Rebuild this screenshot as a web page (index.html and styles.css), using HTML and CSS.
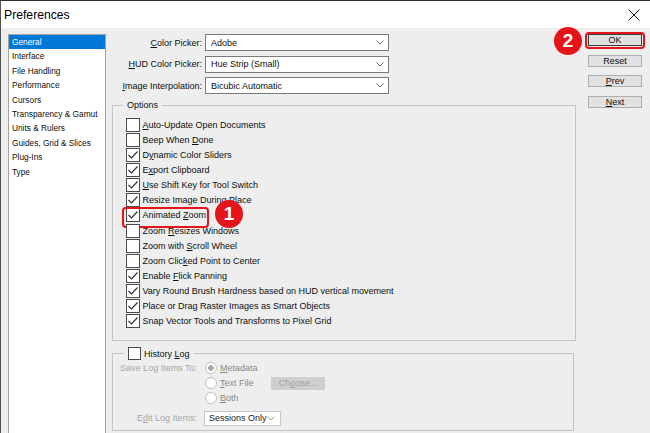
FILE: index.html
```html
<!DOCTYPE html>
<html>
<head>
<meta charset="utf-8">
<title>Preferences</title>
<link rel="stylesheet" href="styles.css">
</head>
<body>
<div class="window">
  <div class="titlebar">
    <span class="title">Preferences</span>
    <svg class="close" viewBox="0 0 12 12"><path d="M0.5 0.5 L11.5 11.5 M11.5 0.5 L0.5 11.5" stroke="#1a1a1a" stroke-width="1" fill="none"/></svg>
  </div>
  <div class="body">
    <ul class="nav">
      <li class="sel">General</li>
      <li>Interface</li>
      <li>File Handling</li>
      <li>Performance</li>
      <li>Cursors</li>
      <li>Transparency &amp; Gamut</li>
      <li>Units &amp; Rulers</li>
      <li>Guides, Grid &amp; Slices</li>
      <li>Plug-Ins</li>
      <li>Type</li>
    </ul>
    <div class="main">
      <div class="pickers">
        <span class="plabel"><u>C</u>olor Picker:</span>
        <div class="select"><span>Adobe</span><svg class="chev" viewBox="0 0 8 5"><path d="M0.5 0.5 L4 4 L7.5 0.5" stroke="#6a6a6a" fill="none"/></svg></div>
        <span class="plabel"><u>H</u>UD Color Picker:</span>
        <div class="select"><span>Hue Strip (Small)</span><svg class="chev" viewBox="0 0 8 5"><path d="M0.5 0.5 L4 4 L7.5 0.5" stroke="#6a6a6a" fill="none"/></svg></div>
        <span class="plabel"><u>I</u>mage Interpolation:</span>
        <div class="select"><span>Bicubic Automatic</span><svg class="chev" viewBox="0 0 8 5"><path d="M0.5 0.5 L4 4 L7.5 0.5" stroke="#6a6a6a" fill="none"/></svg></div>
      </div>

      <fieldset class="group options">
        <legend>Options</legend>
        <div class="checks">
          <div class="row"><span class="cb"></span><span><u>A</u>uto-Update Open Documents</span></div>
          <div class="row"><span class="cb"></span><span>Beep When <u>D</u>one</span></div>
          <div class="row"><span class="cb on"><svg viewBox="0 0 14 14"><path d="M2.5 7 L5.5 10 L11.5 3.5" stroke="#333" stroke-width="1.2" fill="none"/></svg></span><span>D<u>y</u>namic Color Sliders</span></div>
          <div class="row"><span class="cb on"><svg viewBox="0 0 14 14"><path d="M2.5 7 L5.5 10 L11.5 3.5" stroke="#333" stroke-width="1.2" fill="none"/></svg></span><span>E<u>x</u>port Clipboard</span></div>
          <div class="row"><span class="cb on"><svg viewBox="0 0 14 14"><path d="M2.5 7 L5.5 10 L11.5 3.5" stroke="#333" stroke-width="1.2" fill="none"/></svg></span><span><u>U</u>se Shift Key for Tool Switch</span></div>
          <div class="row"><span class="cb on"><svg viewBox="0 0 14 14"><path d="M2.5 7 L5.5 10 L11.5 3.5" stroke="#333" stroke-width="1.2" fill="none"/></svg></span><span>Resize Image Durin<u>g</u> Place</span></div>
          <div class="row hl"><span class="cb on"><svg viewBox="0 0 14 14"><path d="M2.5 7 L5.5 10 L11.5 3.5" stroke="#333" stroke-width="1.2" fill="none"/></svg></span><span>Animated <u>Z</u>oom</span><span class="badge b1">1</span></div>
          <div class="row"><span class="cb"></span><span>Zoom <u>R</u>esizes Windows</span></div>
          <div class="row"><span class="cb"></span><span>Zoom with <u>S</u>croll Wheel</span></div>
          <div class="row"><span class="cb"></span><span>Zoom Clic<u>k</u>ed Point to Center</span></div>
          <div class="row"><span class="cb on"><svg viewBox="0 0 14 14"><path d="M2.5 7 L5.5 10 L11.5 3.5" stroke="#333" stroke-width="1.2" fill="none"/></svg></span><span>Enable <u>F</u>lick Panning</span></div>
          <div class="row"><span class="cb on"><svg viewBox="0 0 14 14"><path d="M2.5 7 L5.5 10 L11.5 3.5" stroke="#333" stroke-width="1.2" fill="none"/></svg></span><span>Vary Round Brush Hardness based on HUD vertical movement</span></div>
          <div class="row"><span class="cb on"><svg viewBox="0 0 14 14"><path d="M2.5 7 L5.5 10 L11.5 3.5" stroke="#333" stroke-width="1.2" fill="none"/></svg></span><span>Place or Drag Raster Images as Smart Objects</span></div>
          <div class="row"><span class="cb on"><svg viewBox="0 0 14 14"><path d="M2.5 7 L5.5 10 L11.5 3.5" stroke="#333" stroke-width="1.2" fill="none"/></svg></span><span>Snap Vector Tools and Transforms to Pixel Grid</span></div>
        </div>
      </fieldset>

      <fieldset class="group history">
        <legend><span class="cb"></span><span>History <u>L</u>og</span></legend>
        <div class="hrow">
          <span class="hlabel">Save Log Items To:</span>
          <span class="opt"><span class="radio checked"></span><span><u>M</u>etadata</span></span>
        </div>
        <div class="hrow">
          <span class="hlabel"></span>
          <span class="opt"><span class="radio"></span><span><u>T</u>ext File</span></span>
          <span class="choose">Ch<u>o</u>ose...</span>
        </div>
        <div class="hrow">
          <span class="hlabel"></span>
          <span class="opt"><span class="radio"></span><span><u>B</u>oth</span></span>
        </div>
        <div class="hrow edit">
          <span class="hlabel">E<u>d</u>it Log Items:</span>
          <div class="dsel"><span>Sessions Only</span><svg class="chev" viewBox="0 0 8 5"><path d="M0.5 0.5 L4 4 L7.5 0.5" stroke="#a0a0a0" fill="none"/></svg></div>
        </div>
      </fieldset>
    </div>
    <div class="buttons">
      <div class="btn default">OK<span class="badge b2">2</span></div>
      <div class="btn">Reset</div>
      <div class="btn"><u>P</u>rev</div>
      <div class="btn"><u>N</u>ext</div>
    </div>
  </div>
</div>
</body>
</html>
```

FILE: styles.css
```css
* { box-sizing: border-box; }
html, body { margin: 0; padding: 0; }
body {
  width: 650px;
  height: 433px;
  overflow: hidden;
  background: #eeeeee;
  font-family: "Liberation Sans", Arial, sans-serif;
  font-size: 9px;
  color: #0d0d0d;
}
u { text-underline-offset: 1px; }
.window {
  height: 433px;
  border-top: 1px solid #2e2e2e;
  border-left: 1px solid #505050;
}
.titlebar {
  height: 27px;
  background: #fff;
  display: flex;
  align-items: center;
  justify-content: space-between;
  padding: 0 10px 0 3px;
}
.title { font-size: 12.2px; color: #000; }
.close { width: 12px; height: 12px; display: block; }

.body { display: flex; align-items: flex-start; }

.nav {
  list-style: none;
  margin: 6px 0 0 7px;
  padding: 0;
  width: 98px;
  height: 420px;
  background: #fff;
  border: 1px solid #a3a3a3;
  font-size: 8.3px;
  color: #0d0d0d;
}
.nav li {
  height: 14.4px;
  line-height: 14.4px;
  padding-left: 3px;
  white-space: nowrap;
}
.nav li.sel { background: #0078d7; color: #fff; }

.main { width: 464px; margin-left: 6px; padding-top: 6px; }

.pickers {
  display: grid;
  grid-template-columns: 90px 184px;
  column-gap: 3px;
  row-gap: 4.5px;
  grid-auto-rows: 17px;
  align-items: center;
}
.plabel { text-align: right; white-space: nowrap; }
.select {
  height: 17px;
  background: #fff;
  border: 1px solid #7a7a7a;
  display: flex;
  align-items: center;
  justify-content: space-between;
  padding: 0 4px 0 5px;
}
.chev { width: 8px; height: 5px; display: block; }

fieldset.group {
  margin: 5px 0 0;
  padding: 6px 0 11px 10px;
  border: 1px solid #c4c4c4;
  min-width: 0;
}
fieldset.group legend { padding: 0 4px; line-height: 12px; }

.checks {
  margin-left: 2.5px;
  display: flex;
  flex-direction: column;
  align-items: flex-start;
}
.row {
  height: 15.15px;
  display: flex;
  align-items: center;
  gap: 3px;
  position: relative;
  white-space: nowrap;
}
.cb {
  width: 14px;
  height: 14px;
  border: 1px solid #4a4a4a;
  background: #fff;
  flex: none;
  display: block;
  position: relative;
}
.cb svg {
  position: absolute;
  left: -1px;
  top: -1px;
  width: 14px;
  height: 14px;
}
.row.hl::after {
  content: "";
  position: absolute;
  left: -4px;
  right: -3px;
  top: 50%;
  height: 16.5px;
  margin-top: -8.25px;
  border: 2.5px solid #e3141b;
  border-radius: 4px;
}

.badge {
  position: absolute;
  width: 28px;
  height: 28px;
  border-radius: 50%;
  background: #e5141b;
  color: #fff;
  font-weight: bold;
  font-size: 19px;
  display: flex;
  align-items: center;
  justify-content: center;
  z-index: 2;
}
.b1 { left: calc(100% + 9px); top: 50%; margin-top: -15.5px; }
.b2 { right: calc(100% + 7px); top: 50%; margin-top: -13.5px; }

fieldset.history {
  margin-top: 6px;
  width: 462px;
  padding: 0 0 4px 0;
}
fieldset.history legend {
  margin-left: 11px;
  line-height: 14px;
  display: flex;
  align-items: center;
  gap: 3px;
}
fieldset.history legend .cb { width: 13px; height: 13px; }

.hrow { display: flex; align-items: center; height: 15px; }
.hlabel {
  width: 84px;
  text-align: right;
  margin-right: 8px;
  color: #a6a6a6;
  white-space: nowrap;
}
.opt {
  display: flex;
  align-items: center;
  gap: 3px;
  width: 66px;
  color: #8a8a8a;
  white-space: nowrap;
}
.radio {
  width: 12px;
  height: 12px;
  border-radius: 50%;
  border: 1px solid #c0c0c0;
  background: #fff;
  flex: none;
}
.radio.checked {
  background: radial-gradient(circle, #a9a9a9 0 2.6px, #fff 3px);
}
.choose {
  width: 54px;
  height: 13.5px;
  background: #cfcfcf;
  color: #a0a0a0;
  display: flex;
  align-items: center;
  justify-content: center;
}
.hrow.edit { margin-top: 5px; }
.hrow.edit .hlabel { margin-right: 7px; }
.dsel {
  width: 77px;
  height: 15px;
  background: #fff;
  border: 1px solid #c8c8c8;
  display: flex;
  align-items: center;
  justify-content: space-between;
  padding: 0 5px 0 4px;
  color: #222;
  white-space: nowrap;
}

.buttons {
  margin-left: 12px;
  margin-top: 6px;
  width: 54px;
  display: flex;
  flex-direction: column;
  gap: 8.5px;
}
.btn {
  height: 12px;
  background: #e1e1e1;
  border: 1px solid #adadad;
  display: flex;
  align-items: center;
  justify-content: center;
  position: relative;
  line-height: 10px;
}
.btn.default { border-color: #3a3a3a; }
.btn.default::after {
  content: "";
  position: absolute;
  left: -4px;
  right: -4px;
  top: -3.5px;
  bottom: -3.5px;
  border: 2.5px solid #e3141b;
  border-radius: 4px;
}
```
